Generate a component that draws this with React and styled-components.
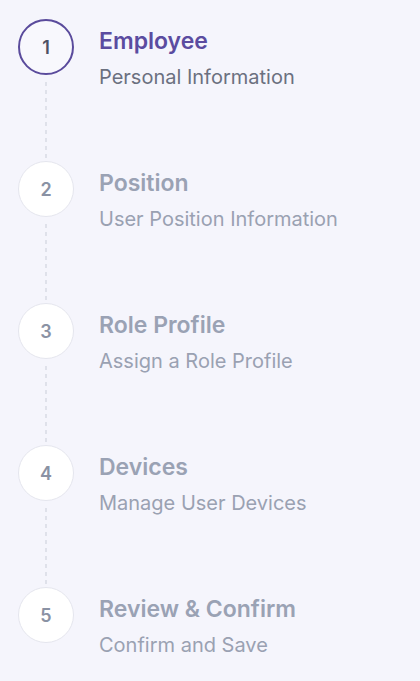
import React from "react";
import styled, { createGlobalStyle } from "styled-components";

const GlobalStyle = createGlobalStyle`
  html, body {
    margin: 0;
    padding: 0;
    background: #f5f5fc;
    font-family: Inter, "Noto Sans", sans-serif;
  }
`;

const Stepper = styled.div`
  display: flex;
  flex-direction: column;
  padding: 19px 0 0 18px;
  min-height: 681px;
  box-sizing: border-box;
  background: #f5f5fc;
`;

const Step = styled.div`
  display: flex;
  gap: 25px;
`;

const Rail = styled.div`
  display: flex;
  flex-direction: column;
  align-items: center;
  width: 56px;
`;

const Circle = styled.div`
  width: 56px;
  height: 56px;
  box-sizing: border-box;
  border-radius: 50%;
  display: flex;
  align-items: center;
  justify-content: center;
  font-size: 18px;
  font-weight: 600;
  background: ${(p) => (p.$active ? "#f8f8fd" : "#ffffff")};
  border: ${(p) => (p.$active ? "2.5px solid #5a4b9c" : "1px solid #e5e6ee")};
  color: ${(p) => (p.$active ? "#4d5165" : "#8a92a4")};
`;

const Connector = styled.div`
  width: 2px;
  height: 78px;
  margin: 7px 0 1px;
  background: repeating-linear-gradient(
    to bottom,
    #dfe1ea 0 4px,
    transparent 4px 8px
  );
`;

const Text = styled.div`
  display: flex;
  flex-direction: column;
  padding-top: 7px;
`;

const Title = styled.div`
  font-size: 23px;
  line-height: 30px;
  font-weight: 600;
  color: ${(p) => (p.$active ? "#5b4ca0" : "#9aa2b4")};
`;

const Subtitle = styled.div`
  margin-top: 8px;
  font-size: 20px;
  line-height: 26px;
  color: ${(p) => (p.$active ? "#6b7080" : "#9aa1b2")};
`;

const steps = [
  { title: "Employee", subtitle: "Personal Information" },
  { title: "Position", subtitle: "User Position Information" },
  { title: "Role Profile", subtitle: "Assign a Role Profile" },
  { title: "Devices", subtitle: "Manage User Devices" },
  { title: "Review & Confirm", subtitle: "Confirm and Save" },
];

const App = () => {
  const current = 0;
  return (
    <>
      <GlobalStyle />
      <Stepper>
        {steps.map((s, i) => (
          <Step key={s.title}>
            <Rail>
              <Circle $active={i === current}>{i + 1}</Circle>
              {i < steps.length - 1 && <Connector />}
            </Rail>
            <Text>
              <Title $active={i === current}>{s.title}</Title>
              <Subtitle $active={i === current}>{s.subtitle}</Subtitle>
            </Text>
          </Step>
        ))}
      </Stepper>
    </>
  );
};

export default App;
